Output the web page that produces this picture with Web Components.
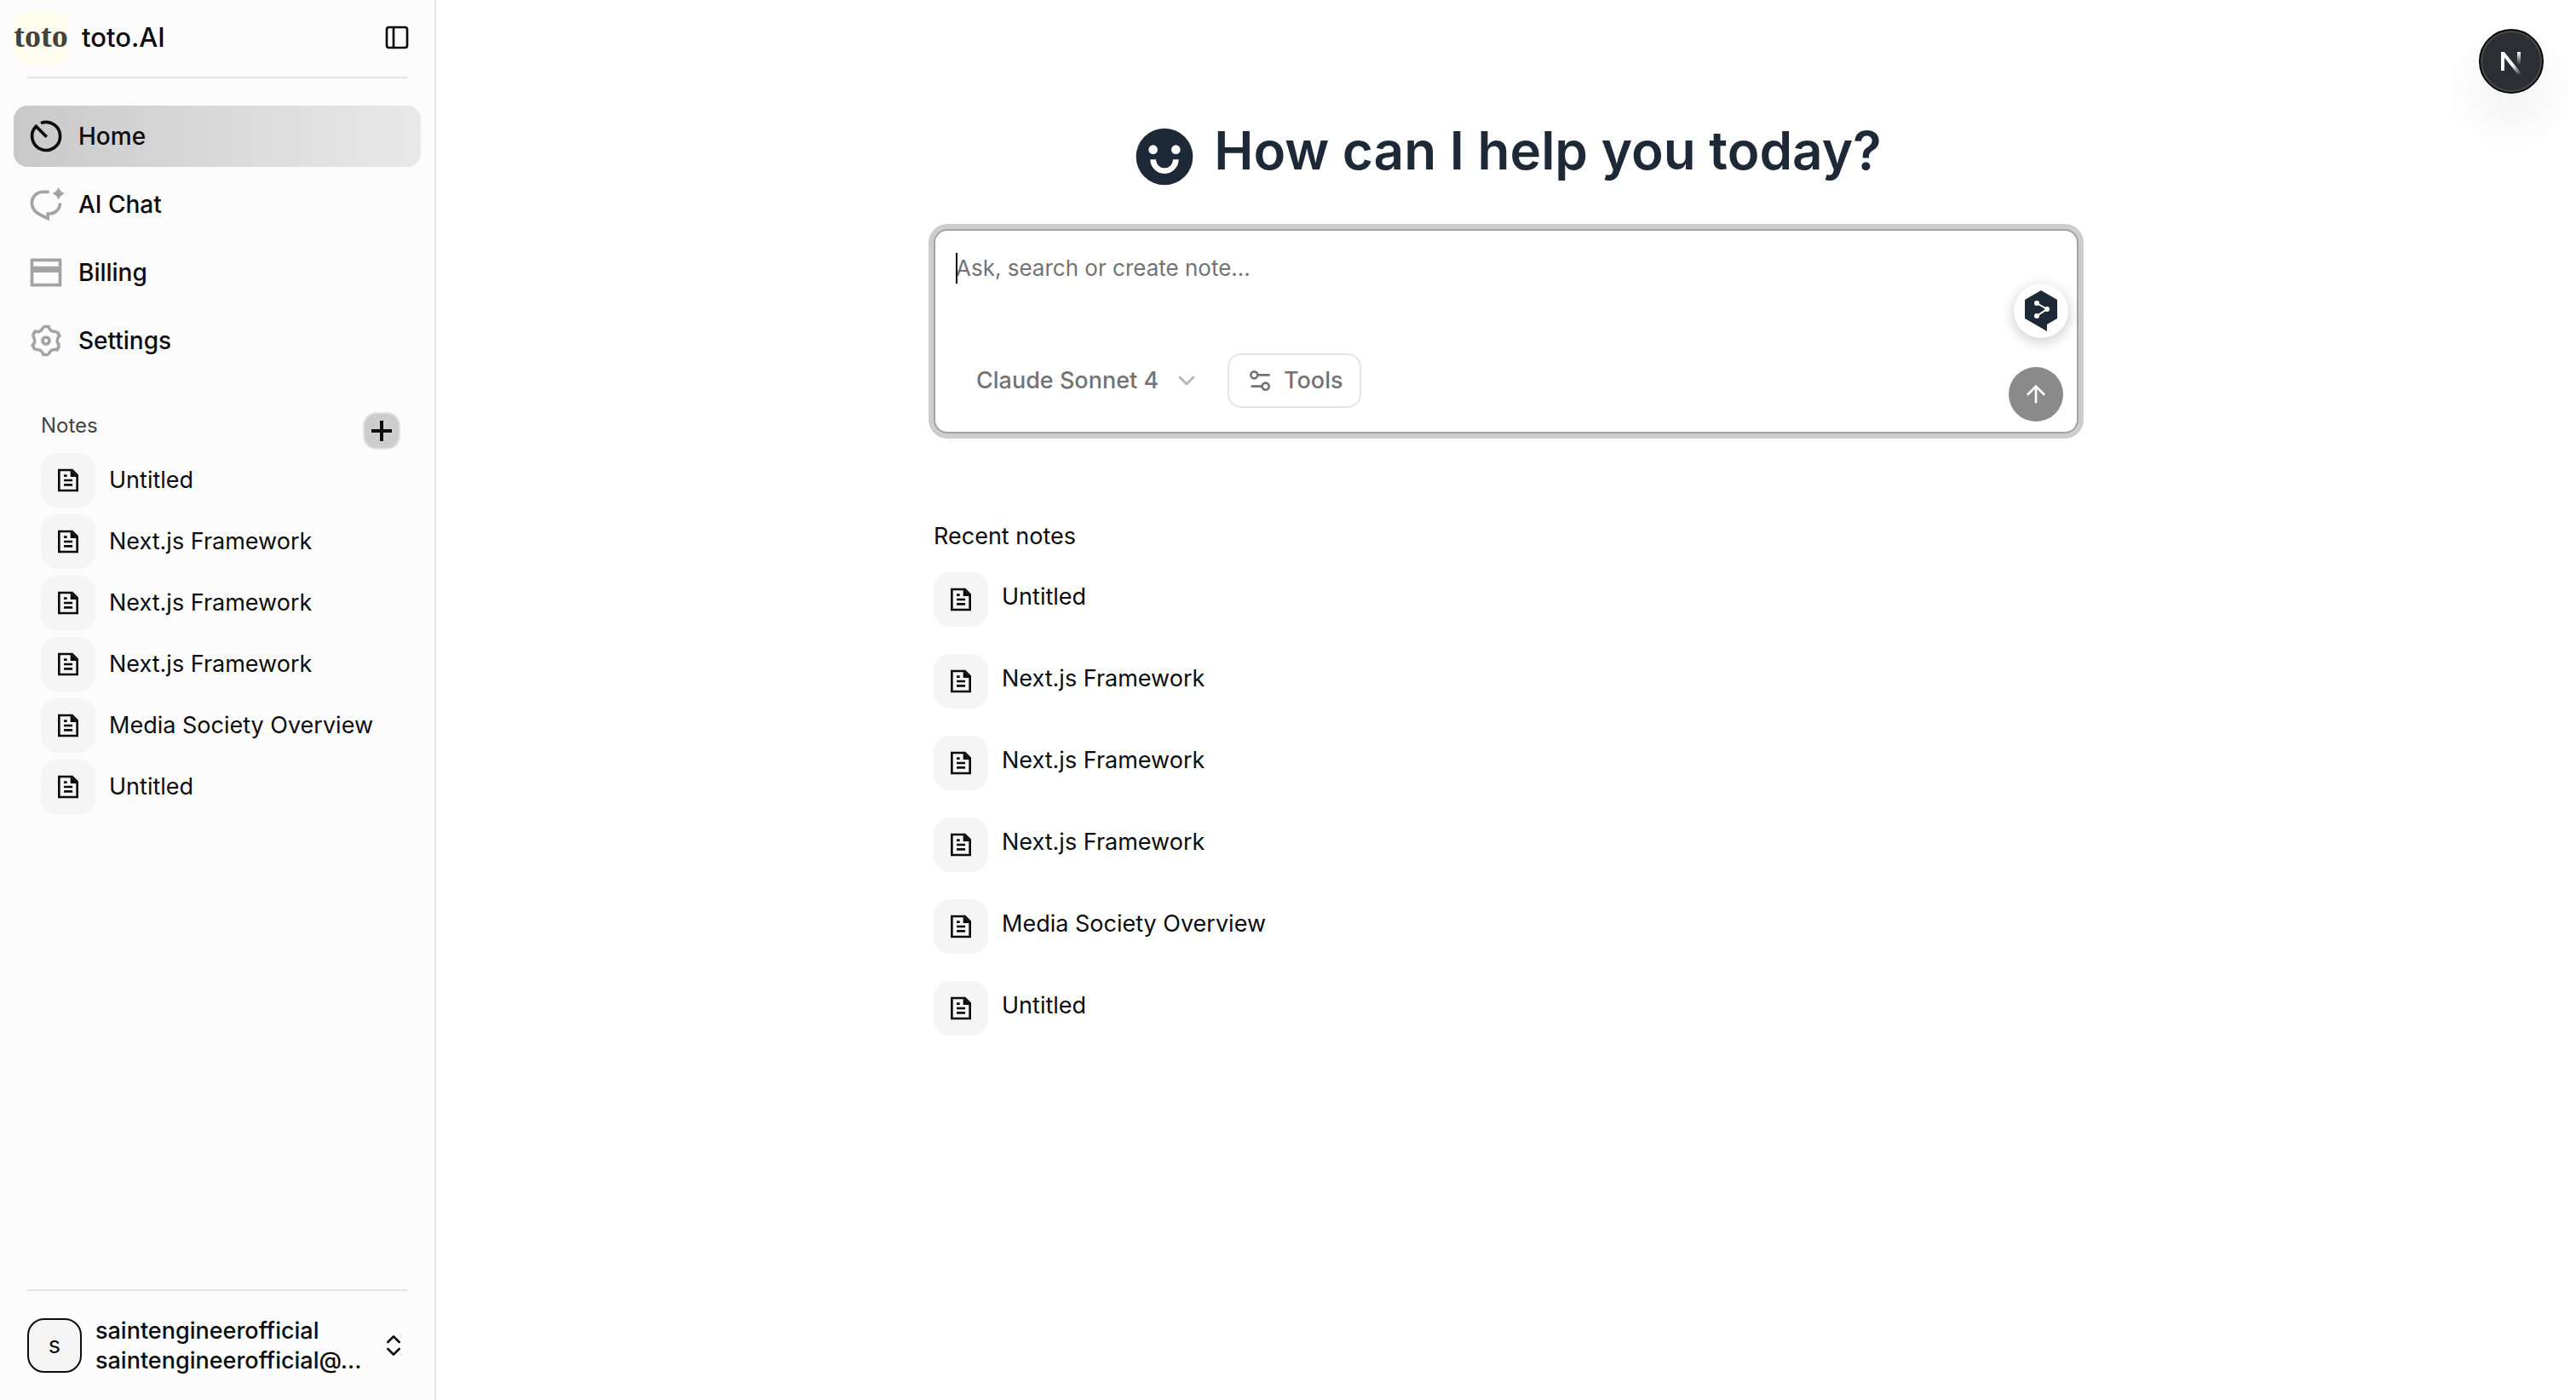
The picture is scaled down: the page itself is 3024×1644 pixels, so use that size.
<!DOCTYPE html>
<html lang="en">
<head>
<meta charset="UTF-8">
<meta name="viewport" content="width=device-width, initial-scale=1.0">
<title>toto.AI</title>
<style>
    :root {
        --bg: #ffffff;
        --sidebar: #fcfcfc;
        --border: #e5e5e5;
        --text: #0c0c0d;
        --muted: #737373;
        --icon-muted: #a3a3a3;
        --tile: #f5f5f5;
        --ink: #1e2937;
    }

    body {
        margin: 0;
        background: var(--bg);
        color: var(--text);
        font-family: Inter, "Liberation Sans", sans-serif;
        font-size: 27px;
        line-height: 36px;
    }
</style>
</head>
<body>
<app-shell>
    <app-sidebar slot="sidebar">
        <nav-item slot="nav" icon="home" active>Home</nav-item>
        <nav-item slot="nav" icon="chat">AI Chat</nav-item>
        <nav-item slot="nav" icon="card">Billing</nav-item>
        <nav-item slot="nav" icon="gear">Settings</nav-item>

        <note-item slot="notes">Untitled</note-item>
        <note-item slot="notes">Next.js Framework</note-item>
        <note-item slot="notes">Next.js Framework</note-item>
        <note-item slot="notes">Next.js Framework</note-item>
        <note-item slot="notes">Media Society Overview</note-item>
        <note-item slot="notes">Untitled</note-item>

        <user-menu slot="footer" initial="s">
            <span slot="name">saintengineerofficial</span>
            <span slot="email">saintengineerofficial@...</span>
        </user-menu>
    </app-sidebar>

    <page-title>How can I help you today?</page-title>
    <prompt-box></prompt-box>
    <recent-notes>
        <note-item>Untitled</note-item>
        <note-item>Next.js Framework</note-item>
        <note-item>Next.js Framework</note-item>
        <note-item>Next.js Framework</note-item>
        <note-item>Media Society Overview</note-item>
        <note-item>Untitled</note-item>
    </recent-notes>

    <dev-badge slot="overlay"></dev-badge>
</app-shell>

<script>
// Icon bodies, all on a 24x24 grid
const gearSegment = [0, 60, 120, 180, 240, 300]
    .map(a => `<path transform="translate(12 12) rotate(${a})" d="M-1.6-9H1.6C2.3-6.5 4.4-5.3 6.99-5.89"/>`)
    .join('');

const ICONS = {
    home: '<path d="M8.7 3.6A9 9 0 1 1 5.64 5.64L12.4 12.4"/>',
    chat: `<path d="M14 4h-4a7 7 0 0 0-7 7.4C3 16.2 7.2 18.4 13.2 21V18h1.2A6.8 6.8 0 0 0 21 11.2"/>
        <path d="M20 1Q21 4 24 5Q21 6 20 9Q19 6 16 5Q19 4 20 1Z" fill="currentColor" stroke="none"/>`,
    card: '<path d="M3 4h18v16H3Z"/><path d="M3 10h18" stroke-width="4"/>',
    gear: gearSegment + '<circle cx="12" cy="12" r="2.2"/>',
    doc: `<path d="M4 3h11.5L20 7.500V21H4Z"/>
        <path d="M14 3v6h6.500Z" fill="currentColor" stroke="none"/>
        <path d="M8.3 8h2.7M8.3 12h7.5M8.3 16h7.5"/>`,
    panel: '<rect x="3" y="3" width="18" height="18" rx="2"/><path d="M9 3v18"/>',
    plus: '<path d="M12 3v18M3 12h18"/>',
    updown: '<path d="m7 15 5 5 5-5M7 9l5-5 5 5"/>',
    down: '<path d="m6 9 6 6 6-6"/>',
    tools: '<path d="M20 7h-9M14 17H5"/><circle cx="17" cy="17" r="3"/><circle cx="7" cy="7" r="3"/>',
    up: '<path d="m5 12 7-7 7 7M12 19V5"/>',
    smile: `<circle cx="12" cy="12" r="10" fill="currentColor" stroke="none"/>
        <circle cx="8" cy="9.5" r="1.6" fill="#fff" stroke="none"/>
        <circle cx="16" cy="9.5" r="1.6" fill="#fff" stroke="none"/>
        <path d="M8 13a4 4 0 0 0 8 0" stroke="#fff"/>`
};

function icon(name, size, stroke = 2, cap = 'butt') {
    return `<svg width="${size}" height="${size}" viewBox="0 0 24 24" fill="none" stroke="currentColor"
        stroke-width="${stroke}" stroke-linecap="${cap}" stroke-linejoin="${cap === 'round' ? 'round' : 'miter'}"
        overflow="visible" aria-hidden="true">${ICONS[name]}</svg>`;
}

// Shared base: renders once into an open shadow root
class BaseElement extends HTMLElement {
    connectedCallback() {
        if (this.shadowRoot) return;
        this.attachShadow({ mode: 'open' });
        this.shadowRoot.innerHTML = `
            <style>
                *, *::before { box-sizing: border-box; }
                button, select, textarea { font: inherit; color: inherit; margin: 0; }
                button { background: none; border: none; padding: 0; cursor: pointer; }
                a { color: inherit; text-decoration: none; }
                svg { display: block; flex: none; }
            </style>
            ${this.template()}
        `;
    }
}

// Page frame: sidebar on the left, centered content column
class AppShell extends BaseElement {
    template() {
        return `
            <style>
                :host {
                    display: flex;
                    min-height: 100vh;
                }

                main {
                    flex: 1;
                    min-width: 0;
                    padding: 136px 48px 48px;
                }

                .column {
                    display: flex;
                    flex-direction: column;
                    max-width: 1344px;
                    margin: 0 auto;
                }
            </style>
            <slot name="sidebar"></slot>
            <main>
                <div class="column"><slot></slot></div>
            </main>
            <slot name="overlay"></slot>
        `;
    }
}

class AppSidebar extends BaseElement {
    template() {
        return `
            <style>
                :host {
                    display: flex;
                    flex-direction: column;
                    flex: none;
                    box-sizing: border-box;
                    width: 512px;
                    padding: 12px 16px 32px;
                    background: var(--sidebar);
                    border-right: 2px solid var(--border);
                }

                header {
                    display: flex;
                    align-items: center;
                    gap: 16px;
                    padding-right: 12px;
                }

                .logo {
                    display: flex;
                    justify-content: center;
                    width: 64px;
                    height: 64px;
                    border-radius: 16px;
                    background: #fffded;
                    color: #444240;
                    font: bold 38px/60px "Liberation Serif", serif;
                }

                .brand {
                    flex: 1;
                    font-size: 31px;
                    font-weight: 500;
                }

                hr {
                    width: calc(100% - 32px);
                    height: 2px;
                    margin: 14px 16px 32px;
                    border: none;
                    background: var(--border);
                }

                nav {
                    display: flex;
                    flex-direction: column;
                    gap: 8px;
                }

                .notes {
                    display: flex;
                    flex-direction: column;
                    gap: 8px;
                    padding: 0 24px 0 32px;
                    margin-top: 48px;
                }

                .notes-head {
                    display: flex;
                    justify-content: space-between;
                    height: 40px;
                }

                h2 {
                    margin: 0;
                    font-size: 24px;
                    font-weight: 400;
                    line-height: 32px;
                    color: #444;
                }

                .add {
                    display: grid;
                    place-items: center;
                    width: 44px;
                    height: 44px;
                    border: 2px solid #e2e2e2;
                    border-radius: 16px;
                    background: #cdcdcd;
                }

                footer { margin-top: auto; }
            </style>
            <header>
                <div class="logo">toto</div>
                <div class="brand">toto.AI</div>
                <button aria-label="Toggle sidebar">${icon('panel', 32, 2, 'round')}</button>
            </header>
            <hr>
            <nav><slot name="nav"></slot></nav>
            <section class="notes">
                <div class="notes-head">
                    <h2>Notes</h2>
                    <button class="add" aria-label="Add note">${icon('plus', 32, 3)}</button>
                </div>
                <slot name="notes"></slot>
            </section>
            <footer>
                <hr>
                <slot name="footer"></slot>
            </footer>
        `;
    }
}

class NavItem extends BaseElement {
    template() {
        return `
            <style>
                :host { display: block; }

                a {
                    display: flex;
                    align-items: center;
                    gap: 16px;
                    height: 72px;
                    padding: 0 16px;
                    border-radius: 16px;
                    font-size: 28px;
                    font-weight: 500;
                }

                svg { color: var(--icon-muted); }

                :host([active]) a {
                    background: linear-gradient(90deg, #c9c9c9, #e9e9e9);
                }

                :host([active]) svg { color: var(--text); }
            </style>
            <a href="#">${icon(this.getAttribute('icon'), 44)}<span><slot></slot></span></a>
        `;
    }
}

class NoteItem extends BaseElement {
    template() {
        return `
            <style>
                :host { display: block; }

                a {
                    display: flex;
                    align-items: center;
                    gap: 16px;
                }

                .tile {
                    display: grid;
                    place-items: center;
                    width: 64px;
                    height: 64px;
                    border-radius: 20px;
                    background: var(--tile);
                }

                .label { padding-bottom: var(--label-lift, 0); }
            </style>
            <a href="#"><span class="tile">${icon('doc', 32)}</span><span class="label"><slot></slot></span></a>
        `;
    }
}

class UserMenu extends BaseElement {
    template() {
        return `
            <style>
                :host { display: block; }

                button {
                    display: flex;
                    align-items: center;
                    gap: 16px;
                    width: 100%;
                    height: 64px;
                    padding: 0 16px;
                    text-align: left;
                }

                .avatar {
                    display: grid;
                    place-items: center;
                    flex: none;
                    width: 64px;
                    height: 64px;
                    border: 2px solid var(--text);
                    border-radius: 20px;
                    background: var(--tile);
                }

                .who {
                    flex: 1;
                    min-width: 0;
                    font-weight: 500;
                    line-height: 35px;
                    white-space: nowrap;
                }

                .who div {
                    overflow: hidden;
                    text-overflow: ellipsis;
                }
            </style>
            <button>
                <span class="avatar">${this.getAttribute('initial')}</span>
                <div class="who">
                    <div><slot name="name"></slot></div>
                    <div><slot name="email"></slot></div>
                </div>
                ${icon('updown', 32, 2, 'round')}
            </button>
        `;
    }
}

class PageTitle extends BaseElement {
    template() {
        return `
            <style>
                :host {
                    display: flex;
                    justify-content: center;
                    gap: 18px;
                    margin-bottom: 45px;
                    color: var(--ink);
                }

                h1 {
                    margin: 0;
                    font-size: 62px;
                    font-weight: 600;
                    line-height: 82px;
                }

                svg { margin-top: 8px; }
            </style>
            ${icon('smile', 80)}
            <h1><slot></slot></h1>
        `;
    }
}

class PromptBox extends BaseElement {
    template() {
        return `
            <style>
                :host {
                    display: block;
                    position: relative;
                    color: var(--muted);
                }

                form {
                    display: flex;
                    flex-direction: column;
                    justify-content: space-between;
                    height: 240px;
                    padding: 24px 16px 12px 24px;
                    border: 2px solid #a3a3a3;
                    border-radius: 16px;
                    background: #fff;
                    box-shadow: 0 0 0 6px #cdcdcd;
                }

                textarea {
                    display: block;
                    width: 100%;
                    height: 108px;
                    padding: 2px 0 0;
                    border: none;
                    outline: none;
                    resize: none;
                    background: none;
                    font-size: 26px;
                }

                textarea::placeholder { color: var(--muted); }

                .caret {
                    position: absolute;
                    left: 26px;
                    top: 28px;
                    width: 2px;
                    height: 36px;
                    background: var(--text);
                }

                .actions {
                    display: flex;
                    align-items: flex-end;
                    gap: 16px;
                    font-weight: 500;
                }

                .model {
                    display: flex;
                    align-items: center;
                    margin: 0 0 16px 20px;
                }

                select {
                    appearance: none;
                    height: 64px;
                    padding: 0 52px 0 4px;
                    border: none;
                    background: none;
                }

                .model svg {
                    margin-left: -36px;
                    color: #b4b4b4;
                    pointer-events: none;
                }

                .tools {
                    display: flex;
                    align-items: center;
                    gap: 12px;
                    height: 64px;
                    padding: 0 20px;
                    margin: 0 0 16px 16px;
                    border: 2px solid var(--border);
                    border-radius: 16px;
                }

                .send {
                    display: grid;
                    place-items: center;
                    width: 64px;
                    height: 64px;
                    margin-left: auto;
                    border-radius: 50%;
                    background: #8a8a8a;
                    color: #fff;
                }

                .translate {
                    position: absolute;
                    right: 12px;
                    top: 64px;
                    width: 64px;
                    height: 64px;
                    border-radius: 50%;
                    background: #fff;
                    box-shadow: 0 4px 16px rgba(0, 0, 0, 0.22);
                }
            </style>
            <form>
                <textarea aria-label="Prompt" placeholder="Ask, search or create note..."></textarea>
                <div class="actions">
                    <div class="model">
                        <select aria-label="Model"><option>Claude Sonnet 4</option></select>
                        ${icon('down', 32, 2, 'round')}
                    </div>
                    <button class="tools" type="button">${icon('tools', 32, 2, 'round')}Tools</button>
                    <button class="send" type="button" aria-label="Send">${icon('up', 32, 2, 'round')}</button>
                </div>
            </form>
            <span class="caret"></span>
            <button class="translate" aria-label="Translate">
                <svg width="64" height="64" viewBox="-32 -32 64 64" aria-hidden="true">
                    <path d="M0-24 19-13V9L7 16V24L-19 9V-13Z" fill="#1e2937"/>
                    <path d="M-5-9 7-2-5 6" fill="none" stroke="#fff" stroke-width="2"/>
                    <g fill="#fff">
                        <circle cx="-5" cy="-9" r="3"/>
                        <circle cx="7" cy="-2" r="3"/>
                        <circle cx="-5" cy="6" r="3"/>
                    </g>
                </svg>
            </button>
        `;
    }
}

class RecentNotes extends BaseElement {
    template() {
        return `
            <style>
                :host {
                    --label-lift: 6px;
                    display: flex;
                    flex-direction: column;
                    gap: 32px;
                    margin-top: 103px;
                }

                h2 {
                    margin: 0 0 -8px;
                    font-size: inherit;
                    font-weight: 400;
                }
            </style>
            <h2>Recent notes</h2>
            <slot></slot>
        `;
    }
}

// Round dev tools button floating in the top right corner
class DevBadge extends BaseElement {
    template() {
        return `
            <style>
                :host {
                    position: fixed;
                    top: 34px;
                    right: 38px;
                }

                button {
                    display: block;
                    width: 76px;
                    height: 76px;
                    border: 2px solid #0a0a0a;
                    border-radius: 50%;
                    background: #2b2e33;
                    box-shadow: inset 0 0 0 2px #4a4a4a, 0 32px 64px rgba(0, 0, 0, 0.08);
                }
            </style>
            <button aria-label="Open dev tools">
                <svg width="72" height="72" viewBox="-36 -36 72 72" fill="none" stroke-width="4" aria-hidden="true">
                    <defs>
                        <linearGradient id="diag" gradientUnits="userSpaceOnUse" x1="2" y1="4" x2="11" y2="16">
                            <stop stop-color="#fff"/>
                            <stop offset="1" stop-color="#fff" stop-opacity="0"/>
                        </linearGradient>
                        <linearGradient id="bar" gradientUnits="userSpaceOnUse" x1="0" y1="-11" x2="0" y2="4">
                            <stop stop-color="#fff"/>
                            <stop offset="1" stop-color="#fff" stop-opacity="0"/>
                        </linearGradient>
                    </defs>
                    <path d="M-10 11V-11" stroke="#fff"/>
                    <path d="M-10-10 10 15" stroke="url(#diag)"/>
                    <path d="M9-11V4" stroke="url(#bar)"/>
                </svg>
            </button>
        `;
    }
}

customElements.define('app-shell', AppShell);
customElements.define('app-sidebar', AppSidebar);
customElements.define('nav-item', NavItem);
customElements.define('note-item', NoteItem);
customElements.define('user-menu', UserMenu);
customElements.define('page-title', PageTitle);
customElements.define('prompt-box', PromptBox);
customElements.define('recent-notes', RecentNotes);
customElements.define('dev-badge', DevBadge);
</script>
</body>
</html>
